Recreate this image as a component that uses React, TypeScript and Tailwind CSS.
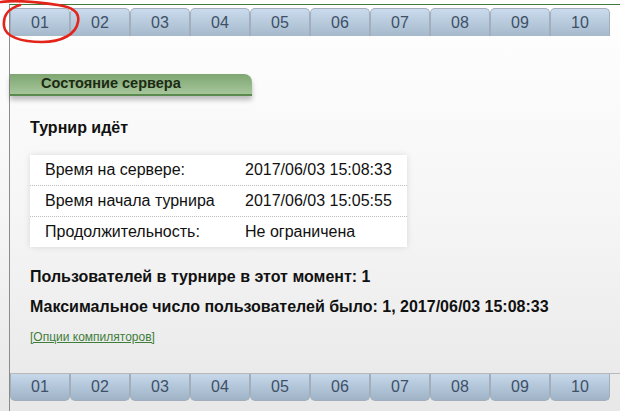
import React from 'react';

const tabs = ['01', '02', '03', '04', '05', '06', '07', '08', '09', '10'];

const rows = [
  ['Время на сервере:', '2017/06/03 15:08:33'],
  ['Время начала турнира', '2017/06/03 15:05:55'],
  ['Продолжительность:', 'Не ограничена'],
];

const TabRow: React.FC<{ bottom?: boolean }> = ({ bottom }) => (
  <div className="flex">
    {tabs.map((t) => (
      <div
        key={t}
        className={
          bottom
            ? 'w-[60px] h-[27px] flex items-center justify-center text-[16px] text-[#3d5068] border border-t-0 border-[#a3adbb] rounded-b-[5px] bg-gradient-to-b from-[#c6d8ea] to-[#9fb3c7]'
            : 'w-[60px] h-[28px] flex items-center justify-center text-[16px] text-[#3d5068] border border-b-0 border-[#a3adbb] rounded-t-[5px] bg-gradient-to-b from-[#c9dbec] to-[#a6b9cc]'
        }
      >
        {t}
      </div>
    ))}
  </div>
);

export default function App() {
  return (
    <div
      className="relative w-[620px] h-[411px] overflow-hidden pt-1 bg-gradient-to-b from-white via-[#f6f6f6] to-[#e8e8e8]"
      style={{ fontFamily: '"Liberation Sans", Arial, sans-serif' }}
    >
      <div className="ml-[9px] h-full flex flex-col border-l border-t border-l-[#8c8c8c] border-t-[#3d7d39]">
        <div className="mt-[3px]">
          <TabRow />
        </div>

        <div className="mt-[38px] w-[242px] h-[22px] flex items-center pl-[31px] text-[14.5px] font-bold text-[#1c2a14] rounded-tr-[8px] border-b-2 border-[#5b8a4e] bg-gradient-to-b from-[#7fa673] to-[#a6c69a] shadow-[0_4px_5px_rgba(0,0,0,0.25)]">
          Состояние сервера
        </div>

        <div className="pl-5 text-[#111]">
          <div className="mt-[23px] text-[16px] font-bold h-[18px] leading-[18px]">Турнир идёт</div>

          <div className="mt-[18px] w-[377px] bg-white shadow-[0_0_6px_rgba(0,0,0,0.12)] text-[16px]">
            {rows.map(([a, b], i) => (
              <div
                key={a}
                className={
                  i < rows.length - 1
                    ? 'flex h-[31px] items-center border-b border-dotted border-[#bdbdbd]'
                    : 'flex h-[30px] items-center'
                }
              >
                <div className="w-[215px] pl-[15px]">{a}</div>
                <div>{b}</div>
              </div>
            ))}
          </div>

          <div className="mt-[21px] text-[16px] font-bold leading-[18px]">Пользователей в турнире в этот момент: 1</div>
          <div className="mt-[12px] text-[16px] font-bold leading-[18px]">
            Максимальное число пользователей было: 1, 2017/06/03 15:08:33
          </div>
          <div className="mt-[14px] text-[12px] leading-[14px]">
            <a className="text-[#3f7d3b] underline" href="#">
              [Опции компиляторов]
            </a>
          </div>
        </div>

        <div className="mt-auto mb-[10px] border-t border-[#b8b8b8]">
          <TabRow bottom />
        </div>
      </div>

      <svg className="absolute left-0 top-0 pointer-events-none" width="90" height="50" viewBox="0 0 90 50">
        <path
          d="M1 2 C15 0, 38 2, 58 5 C72 7, 80 12, 78 22 C76 34, 62 42, 42 42 C22 42, 5 37, 4 26 C3 16, 7 9, 20 5"
          fill="none"
          stroke="#e3241b"
          strokeWidth="2.6"
          strokeLinecap="round"
        />
      </svg>
    </div>
  );
}
